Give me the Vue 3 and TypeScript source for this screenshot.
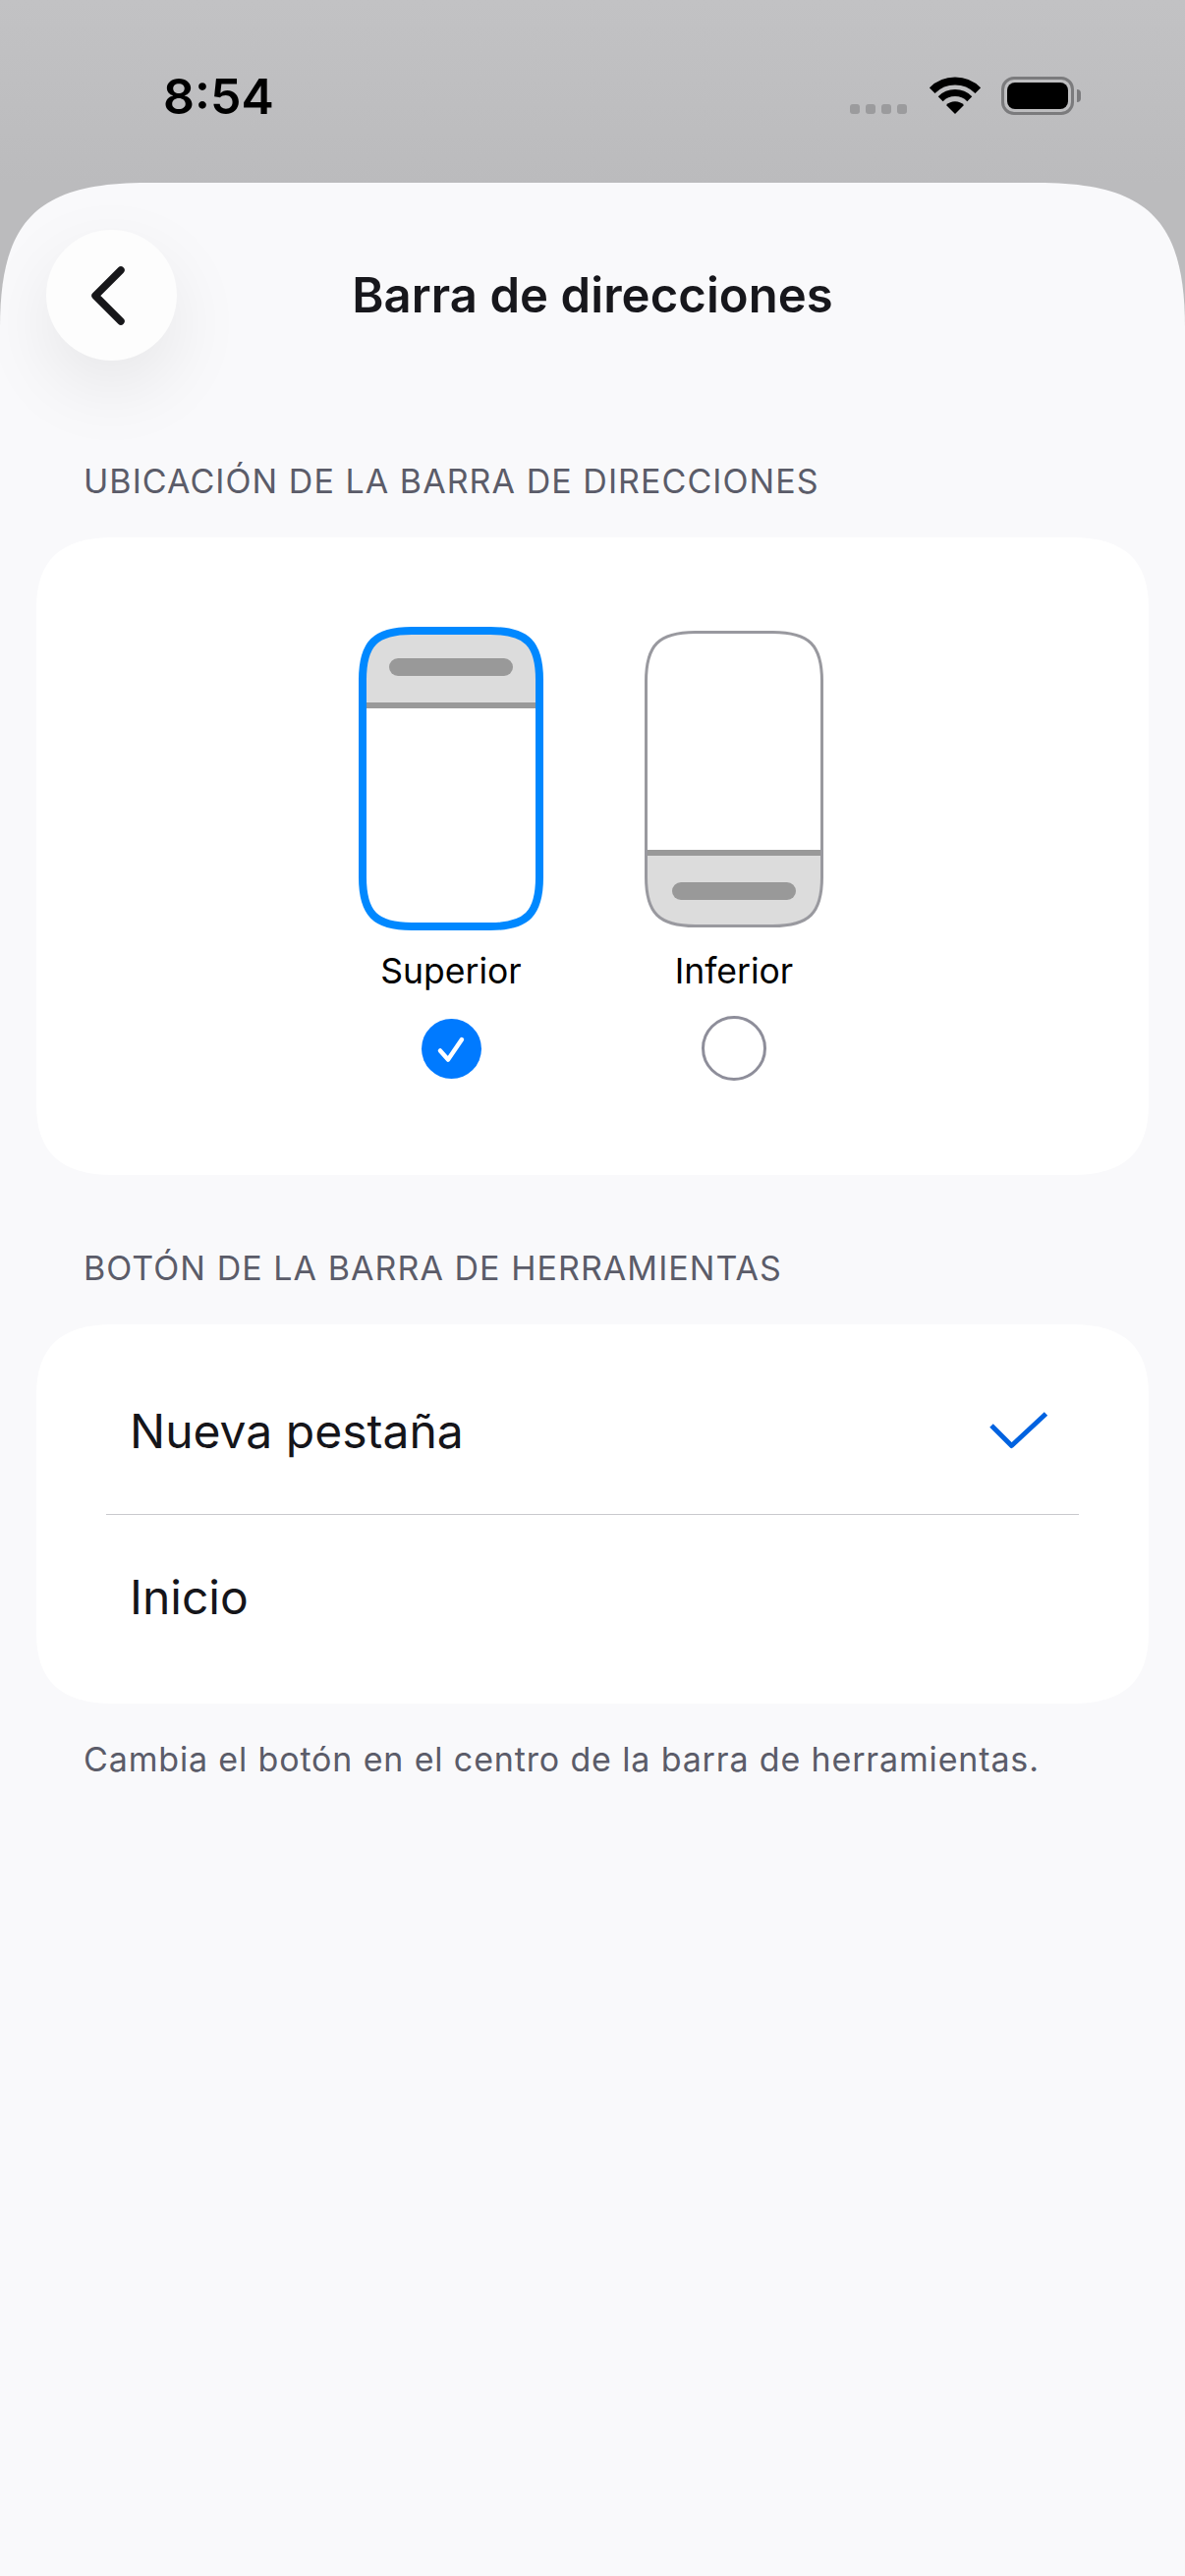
<script setup lang="ts">
import { ref } from 'vue'

type Placement = {
  id: string
  label: string
  width: number
  height: number
  stroke: number
  color: string
  band: [number, number]
  line: number
  pill: [number, number]
}

// iOS style corners: a plain arc looks too tight next to the reference
function smoothRect(w: number, h: number, inset: number, ext: number, ctl: number) {
  const l = inset
  const t = inset
  const r = w - inset
  const b = h - inset
  return `M${l} ${t + ext}C${l} ${t + ctl} ${l + ctl} ${t} ${l + ext} ${t}H${r - ext}` +
    `C${r - ctl} ${t} ${r} ${t + ctl} ${r} ${t + ext}V${b - ext}` +
    `C${r} ${b - ctl} ${r - ctl} ${b} ${r - ext} ${b}H${l + ext}` +
    `C${l + ctl} ${b} ${l} ${b - ctl} ${l} ${b - ext}Z`
}

const placements: Placement[] = [
  {
    id: 'top',
    label: 'Superior',
    width: 188,
    height: 309,
    stroke: 8,
    color: '#0088ff',
    band: [0, 77],
    line: 77,
    pill: [31, 32],
  },
  {
    id: 'bottom',
    label: 'Inferior',
    width: 182,
    height: 302,
    stroke: 3,
    color: '#99999f',
    band: [229, 73],
    line: 223,
    pill: [28, 256],
  },
]
const toolbarOptions = ['Nueva pestaña', 'Inicio']

const placement = ref('top')
const toolbarOption = ref('Nueva pestaña')
</script>

<template>
  <div class="screen">
    <div class="status">
      <span class="time">8:54</span>
      <div class="status-icons">
        <div class="signal"><i></i><i></i><i></i><i></i></div>
        <svg class="wifi" width="52" height="38" viewBox="0 0 52 38">
          <path d="M2.7 14.2A33 33 0 0 1 49.3 14.2" fill="none" stroke="#000" stroke-width="8" />
          <path d="M11.2 22.7A21 21 0 0 1 40.8 22.7" fill="none" stroke="#000" stroke-width="7" />
          <path d="M26 38L17 29A12.7 12.7 0 0 1 35 29Z" fill="#000" />
        </svg>
        <div class="battery"><div class="level"></div></div>
        <div class="nub"></div>
      </div>
    </div>

    <div class="sheet">
      <header class="header">
        <button class="back" type="button">
          <svg width="40" height="64" viewBox="0 0 40 64">
            <path d="M34 6L8 32L34 58" fill="none" stroke="#17171a" stroke-width="7.5" stroke-linecap="round" stroke-linejoin="round" />
          </svg>
        </button>
        <h1 class="title">Barra de direcciones</h1>
      </header>

      <section class="section">
        <h2 class="caption">UBICACIÓN DE LA BARRA DE DIRECCIONES</h2>
        <div class="card picker">
          <div v-for="p in placements" :key="p.id" class="choice">
            <div class="slot">
              <svg :width="p.width" :height="p.height" :viewBox="`0 0 ${p.width} ${p.height}`">
                <clipPath :id="`clip-${p.id}`">
                  <path :d="smoothRect(p.width, p.height, p.stroke / 2, 50, 13)" />
                </clipPath>
                <g :clip-path="`url(#clip-${p.id})`">
                  <rect :width="p.width" :height="p.height" fill="#fff" />
                  <rect x="0" :y="p.band[0]" :width="p.width" :height="p.band[1]" fill="#dcdcdc" />
                  <rect x="0" :y="p.line" :width="p.width" height="6" fill="#999" />
                </g>
                <rect :x="p.pill[0]" :y="p.pill[1]" width="126" height="18" rx="9" fill="#999" />
                <path :d="smoothRect(p.width, p.height, p.stroke / 2, 50, 13)" fill="none" :stroke="p.color" :stroke-width="p.stroke" />
              </svg>
            </div>
            <div class="choice-label">{{ p.label }}</div>
            <div class="radio-slot">
              <div v-if="placement === p.id" class="radio on">
                <svg width="61" height="61" viewBox="0 0 61 61">
                  <path d="M19 32.5L27 41.5L41 21" fill="none" stroke="#fff" stroke-width="4.5" stroke-linecap="round" stroke-linejoin="round" />
                </svg>
              </div>
              <div v-else class="radio"></div>
            </div>
          </div>
        </div>
      </section>

      <section class="section second">
        <h2 class="caption">BOTÓN DE LA BARRA DE HERRAMIENTAS</h2>
        <div class="card list">
          <div v-for="o in toolbarOptions" :key="o" class="row">
            <span class="row-text">{{ o }}</span>
            <svg v-if="toolbarOption === o" class="tick" width="60" height="40" viewBox="0 0 60 40">
              <path d="M2 14L22.5 34.5L57.5 2" fill="none" stroke="#0062e0" stroke-width="5" stroke-linejoin="round" />
            </svg>
          </div>
        </div>
        <p class="note">Cambia el botón en el centro de la barra de herramientas.</p>
      </section>
    </div>
  </div>
</template>

<style scoped>
.screen {
  width: 1206px;
  height: 2622px;
  display: flex;
  flex-direction: column;
  background: linear-gradient(#c2c2c4, #bbbbbd 186px);
  font-family: Inter, "Liberation Sans", sans-serif;
  overflow: hidden;
}
.status {
  height: 186px;
  flex: none;
  display: flex;
  justify-content: space-between;
  align-items: flex-start;
  padding: 68px 106px 0 166px;
  box-sizing: border-box;
}
.time {
  font-size: 50px;
  line-height: 60px;
  font-weight: 600;
  color: #000;
}
.status-icons {
  display: flex;
  align-items: flex-start;
  padding-top: 10px;
}
.signal {
  display: flex;
  gap: 6px;
  margin: 28px 23px 0 0;
}
.signal i {
  width: 10px;
  height: 10px;
  border-radius: 3px;
  background: #9b9b9d;
}
.wifi {
  margin-right: 21px;
}
.battery {
  width: 74px;
  height: 39px;
  box-sizing: border-box;
  border: 3.5px solid #7b7b7d;
  border-radius: 13px;
  padding: 3px;
}
.level {
  width: 100%;
  height: 100%;
  background: #000;
  border-radius: 8px;
}
.nub {
  width: 4px;
  height: 13px;
  margin: 13px 0 0 3px;
  background: #7b7b7d;
  border-radius: 0 7px 7px 0;
}
.sheet {
  flex: 1;
  background: #f9f9fb;
  clip-path: path("M0 148C0 38 38 0 150 0H1056C1168 0 1206 38 1206 148V2436H0Z");
  padding-top: 48px;
}
.header {
  height: 133px;
  padding: 0 47px;
  display: grid;
  grid-template-columns: 133px 1fr 133px;
  align-items: center;
}
.back {
  width: 133px;
  height: 133px;
  padding: 0;
  border: none;
  border-radius: 50%;
  background: #fdfdfd;
  box-shadow: 0 28px 76px rgba(0, 0, 0, 0.08);
  display: flex;
  align-items: center;
  justify-content: center;
}
.back svg {
  margin-left: -10px;
}
.title {
  margin: 0;
  text-align: center;
  font-size: 49px;
  line-height: 60px;
  font-weight: 600;
  color: #17171c;
  letter-spacing: 0.08px;
}
.section {
  padding: 0 37px;
  margin-top: 101px;
}
.section.second {
  margin-top: 73px;
}
.caption {
  margin: 0 0 35px;
  padding-left: 48px;
  font-size: 34px;
  line-height: 44px;
  font-weight: 400;
  letter-spacing: 1.05px;
  color: #5b5c69;
}
.card {
  background: #fff;
}
.picker {
  display: flex;
  justify-content: center;
  gap: 100px;
  padding: 91px 0 96px;
  clip-path: path("M0 72C0 24 24 0 78 0H1054C1108 0 1132 24 1132 72V577C1132 625 1108 649 1054 649H78C24 649 0 625 0 577Z");
}
.choice {
  width: 188px;
  display: flex;
  flex-direction: column;
  align-items: center;
}
.slot {
  height: 309px;
  display: flex;
  align-items: center;
}
.slot svg {
  display: block;
}
.choice-label {
  margin-top: 20px;
  font-size: 35.5px;
  line-height: 44px;
  color: #000;
}
.radio-slot {
  margin-top: 23px;
  height: 66px;
  display: flex;
  align-items: center;
}
.radio {
  width: 66px;
  height: 66px;
  box-sizing: border-box;
  border: 3px solid #8e8e9a;
  border-radius: 50%;
}
.radio.on {
  width: 61px;
  height: 61px;
  border: none;
  background: #007aff;
}
.radio.on svg {
  display: block;
}
.list {
  height: 386px;
  padding: 0 71px;
  display: flex;
  flex-direction: column;
  clip-path: path("M0 72C0 24 24 0 78 0H1054C1108 0 1132 24 1132 72V314C1132 362 1108 386 1054 386H78C24 386 0 362 0 314Z");
}
.row {
  flex: none;
  display: flex;
  align-items: center;
  justify-content: space-between;
  height: 193px;
  padding: 24px 31px 0 24px;
  box-sizing: border-box;
}
.row + .row {
  border-top: 1.5px solid #c9c9cd;
  padding-top: 0;
  padding-bottom: 25px;
}
.row-text {
  font-size: 48px;
  line-height: 60px;
  color: #15151a;
}
.note {
  margin: 35px 0 0;
  padding-left: 48px;
  font-size: 34px;
  line-height: 44px;
  letter-spacing: 0.85px;
  color: #5b5c69;
}
</style>

<style>
html,
body {
  margin: 0;
  background: #f9f9fb;
}
</style>
